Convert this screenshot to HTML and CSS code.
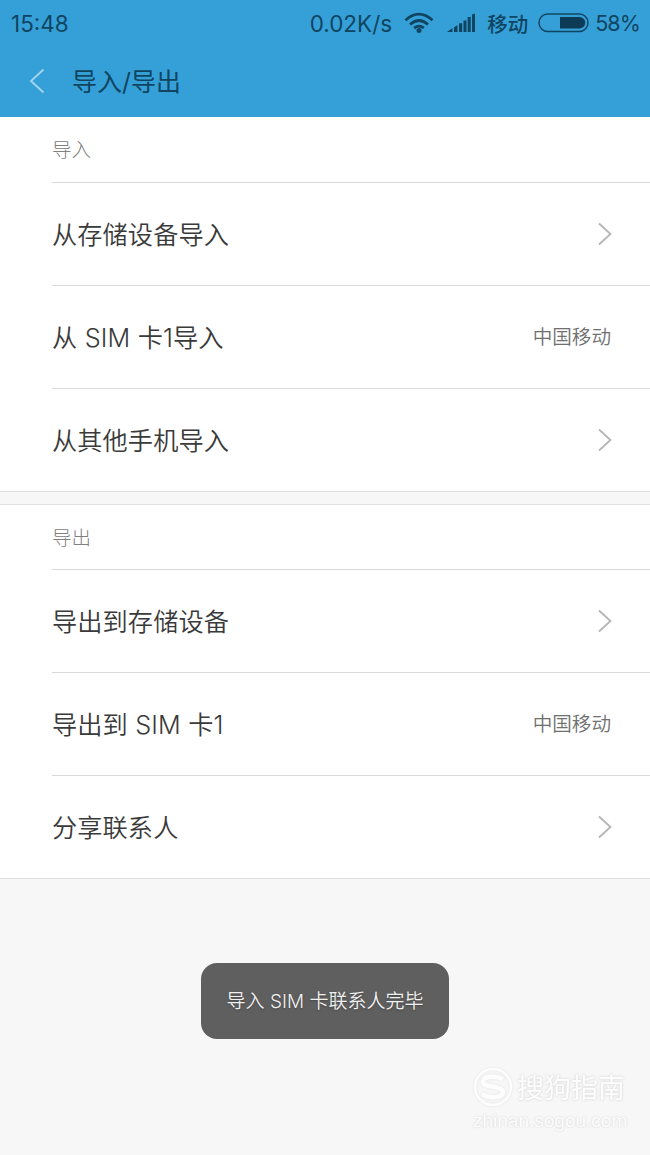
FILE: index.html
```
<!DOCTYPE html>
<html lang="zh-CN">
<head>
<meta charset="utf-8">
<title>导入/导出</title>
<link rel="stylesheet" href="styles.css">
</head>
<body>
<header class="top">
  <div class="status">
    <span class="time">15:48</span>
    <span class="speed">0.02K/s</span>
    <svg class="wifi" width="30" height="22" viewBox="0 0 30 22"><g fill="none" stroke="currentColor" stroke-width="2.7"><path d="M1.5 8.2Q15-3.8 28.5 8.2"/><path d="M6 12.4Q15 4.6 24 12.4"/><path d="M10.2 16.1Q15 12 19.8 16.1"/></g><circle cx="15" cy="18.6" r="2.5" fill="currentColor"/></svg>
    <svg class="signal" width="29" height="20" viewBox="0 0 29 20" fill="currentColor"><path d="M0 19L5.500 15V19ZM7 14.200L10.500 12.200V19H7ZM12 10.200H15.200V19H12ZM16.500 7.500H19.500V19H16.500ZM20.700 4H23.700V19H20.700ZM25 1.500L28 .5V19H25Z"/></svg>
    <span class="carrier">移动</span>
    <svg class="battery" width="51" height="20" viewBox="0 0 51 20"><rect x="1" y="1" width="49" height="17.500" rx="8.750" fill="none" stroke="currentColor" stroke-width="1.500"/><path d="M22 4H41.500A5.700 5.700 0 0 1 41.500 15.500H22Z" fill="#0d3a54"/></svg>
    <span class="percent">58%</span>
  </div>
  <div class="titlebar">
    <svg class="back" width="16" height="26" viewBox="0 0 16 26"><path d="M14.500 1.500L2 13L14.500 24.500" fill="none" stroke="currentColor" stroke-width="1.900"/></svg>
    <h1 class="title">导入/导出</h1>
  </div>
</header>
<main>
  <section class="group">
    <h2 class="heading">导入</h2>
    <div class="row"><span class="label">从存储设备导入</span><svg class="chevron" width="14" height="24" viewBox="0 0 14 24"><path d="M1 1.500L12.500 12L1 22.500"/></svg></div>
    <div class="row"><span class="label">从 SIM 卡1导入</span><span class="value">中国移动</span></div>
    <div class="row"><span class="label">从其他手机导入</span><svg class="chevron" width="14" height="24" viewBox="0 0 14 24"><path d="M1 1.500L12.500 12L1 22.500"/></svg></div>
  </section>
  <section class="group group-next">
    <h2 class="heading">导出</h2>
    <div class="row"><span class="label">导出到存储设备</span><svg class="chevron" width="14" height="24" viewBox="0 0 14 24"><path d="M1 1.500L12.500 12L1 22.500"/></svg></div>
    <div class="row"><span class="label">导出到 SIM 卡1</span><span class="value">中国移动</span></div>
    <div class="row"><span class="label">分享联系人</span><svg class="chevron" width="14" height="24" viewBox="0 0 14 24"><path d="M1 1.500L12.500 12L1 22.500"/></svg></div>
  </section>
</main>
<div class="toast">导入 SIM 卡联系人完毕</div>
<div class="watermark">
  <div class="brand">
    <svg width="40" height="40" viewBox="0 0 40 40" fill="none" stroke="currentColor"><circle cx="20" cy="20" r="18" stroke-width="2.500"/><path d="M30 12.500C24 8 10 9 10 15C10 21 30 18 30 25C30 31 16 32 9 27" stroke-width="4.500"/></svg>
    <span class="name">搜狗指南</span>
  </div>
  <div class="site">zhinan.sogou.com</div>
</div>
</body>
</html>
```
FILE: styles.css
```
* { box-sizing: border-box; }
body {
  margin: 0;
  height: 1155px;
  overflow: hidden;
  position: relative;
  background: #f7f7f7;
  color: #3a3a3a;
  font-family: Inter, "Noto Sans CJK SC", sans-serif;
  white-space: nowrap;
}
h1, h2 { margin: 0; font-weight: 400; }
svg { display: block; flex: none; }
.top { height: 117px; background: #35a0d8; color: #104562; }
.status {
  display: flex;
  align-items: center;
  height: 46px;
  padding: 0 10px 0 11px;
  font-size: 22.5px;
}
.speed { margin-left: auto; }
.wifi { margin-left: 12px; }
.signal { margin-left: 13px; }
.carrier { margin-left: 11px; font-size: 20.5px; font-weight: 500; }
.battery { margin-left: 10px; }
.percent { margin-left: 6px; font-size: 21.5px; letter-spacing: -0.9px; padding-bottom: 1px; }
.titlebar {
  display: flex;
  align-items: center;
  height: 70px;
  padding-left: 29px;
}
.back { color: #a2d4ee; }
.title { margin-left: 27px; padding-bottom: 3px; font-size: 25px; }
.group { background: #fff; padding-left: 52px; border-bottom: 1px solid #dedede; }
.group-next { margin-top: 12px; border-top: 1px solid #e2e2e2; }
.heading {
  height: 65px;
  line-height: 67px;
  font-size: 19.5px;
  font-weight: 300;
  color: #808080;
}
.group-next .heading { height: 64px; }
.row {
  display: flex;
  align-items: center;
  justify-content: space-between;
  height: 103px;
  padding-right: 38px;
  border-top: 1px solid #d9d9d9;
}
.label { padding-bottom: 2px; font-size: 25.2px; font-weight: 350; word-spacing: 0.3px; letter-spacing: 0.1px; }
.value { padding: 0 1px 3px 0; font-size: 19.6px; font-weight: 350; color: #707070; }
.chevron { fill: none; stroke: #b5b5b5; stroke-width: 1.8; }
.toast {
  position: absolute;
  left: 201px;
  top: 963px;
  width: 248px;
  height: 76px;
  border-radius: 16px;
  background: #5f5f5f;
  color: #f0f0f0;
  font-size: 19px;
  font-weight: 350;
  line-height: 78px;
  text-align: center;
  text-shadow: 0 1px 2px #444;
}
.watermark {
  position: absolute;
  left: 473px;
  top: 1067px;
  color: #fdfdfd;
  text-shadow: 0 0 2px #ddd;
}
.brand { display: flex; align-items: center; height: 40px; filter: drop-shadow(0 0 1px #e2e2e2); }
.name { margin-left: 4px; padding-bottom: 2px; font-size: 27px; font-weight: 400; }
.site { font-family: "Liberation Sans", sans-serif; font-size: 19px; line-height: 28px; text-shadow: 0 0 2px #ccc; }
```
